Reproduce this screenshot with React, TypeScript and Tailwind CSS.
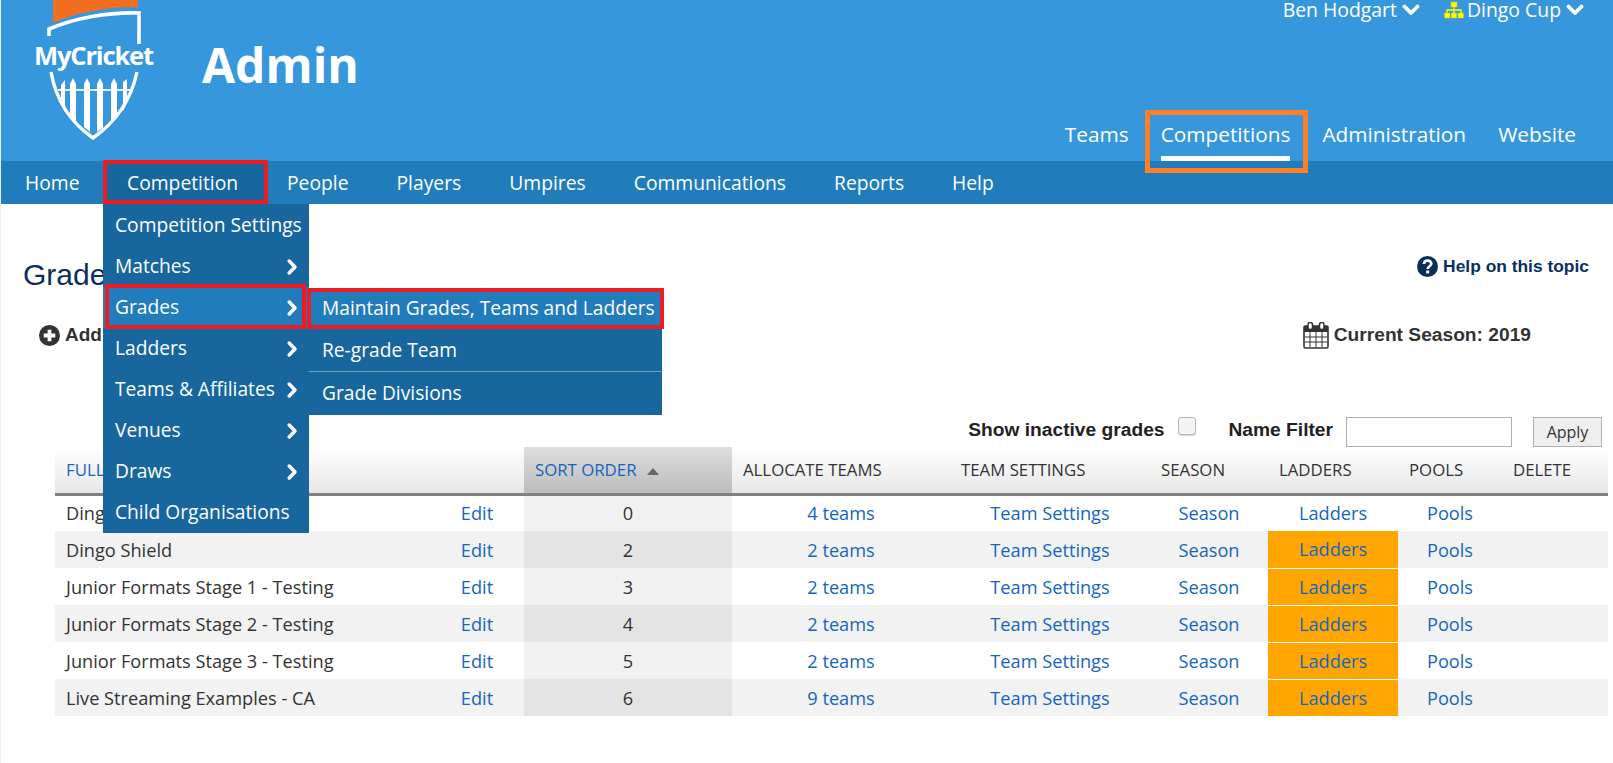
import React from "react";

const OS = "font-['Open_Sans',sans-serif]";

const Chevron = ({ className = "" }: { className?: string }) => (
  <svg viewBox="0 0 10 16" className={className} fill="none" stroke="currentColor" strokeWidth="3.4" strokeLinecap="round" strokeLinejoin="round">
    <path d="M2.2 2 L8 8 L2.2 14" />
  </svg>
);

const ChevronDown = () => (
  <svg viewBox="0 0 18 12" className="w-[18px] h-[12px] text-white" fill="none" stroke="currentColor" strokeWidth="3.8" strokeLinecap="round" strokeLinejoin="round">
    <path d="M2.5 2.5 L9 9 L15.5 2.5" />
  </svg>
);

const Logo = () => (
  <svg viewBox="0 0 135 145" className="w-[135px] h-[145px] shrink-0 block">
    <path d="M23 0 H108 V7.5 C85 6 50 11 23 23 Z" fill="#f26f21" />
    <path d="M19 36 V29 C45 18 78 12 109 13 V44" fill="none" stroke="#fff" strokeWidth="3.6" />
    <text x="4" y="65" fill="#fff" fontFamily="'Open Sans', sans-serif" fontWeight="700" fontSize="25.6" letterSpacing="-1.2">MyCricket</text>
    <path d="M21 72 C26 100 40 122 63 138 C86 122 101 100 107 72" fill="none" stroke="#fff" strokeWidth="3.4" />
    <g fill="#fff">
      <path d="M31 85 L35 80 V112 L31 104 Z" />
      <path d="M40 84 L43 78 L46 84 V122 L40 117 Z" />
      <path d="M54 84 L57 78 L60 84 V132 L54 127 Z" />
      <path d="M67 84 L70 78 L73 84 V128 L67 132 Z" />
      <path d="M81 84 L84 78 L87 84 V117 L81 122 Z" />
      <path d="M93 82 L97 79 V103 L93 111 Z" />
      <rect x="28" y="89" width="72" height="1.8" />
    </g>
  </svg>
);

const OrgIcon = () => (
  <svg viewBox="0 0 20 18" className="w-[20px] h-[18px]">
    <g fill="#ffff00" stroke="#c9c900" strokeWidth="0.5">
      <rect x="7" y="1" width="6" height="5" />
      <rect x="0.5" y="12" width="5.5" height="5" />
      <rect x="7.2" y="12" width="5.5" height="5" />
      <rect x="14" y="12" width="5.5" height="5" />
    </g>
    <path d="M10 6 V12 M3 12 V9 H17 V12" stroke="#ffff00" strokeWidth="1.3" fill="none" />
  </svg>
);

const CalendarIcon = () => (
  <svg viewBox="0 0 26 27" className="w-[26px] h-[27px] shrink-0">
    <rect x="1" y="4" width="24" height="22" rx="1.5" fill="#fff" stroke="#333" strokeWidth="1.6" />
    <rect x="1" y="4" width="24" height="6" fill="#333" />
    <rect x="5" y="0.5" width="4.5" height="7" rx="2" fill="#fff" stroke="#333" strokeWidth="1.5" />
    <rect x="16.5" y="0.5" width="4.5" height="7" rx="2" fill="#fff" stroke="#333" strokeWidth="1.5" />
    <path d="M7 10 V25 M13 10 V25 M19 10 V25 M2 15 H24 M2 20 H24" stroke="#333" strokeWidth="1" />
  </svg>
);

const CircleGlyph = ({ kind, color }: { kind: "plus" | "help"; color: string }) => (
  <svg viewBox="0 0 20 20" className="w-[21px] h-[21px] shrink-0">
    <circle cx="10" cy="10" r="10" fill={color} />
    {kind === "plus" ? (
      <path d="M10 4.5 V15.5 M4.5 10 H15.5" stroke="#fff" strokeWidth="3.6" />
    ) : (
      <>
        <path d="M6.6 7.6 C6.8 3.4 13.6 3.4 13.6 7.4 C13.6 9.8 10.2 9.8 10.2 12.4" fill="none" stroke="#fff" strokeWidth="2.5" />
        <rect x="8.8" y="13.8" width="2.8" height="2.8" fill="#fff" />
      </>
    )}
  </svg>
);

const menu: [string, boolean][] = [
  ["Competition Settings", false],
  ["Matches", true],
  ["Grades", true],
  ["Ladders", true],
  ["Teams & Affiliates", true],
  ["Venues", true],
  ["Draws", true],
  ["Child Organisations", false],
];

const rows: [string, string, string, boolean][] = [
  ["Dingo Cup", "0", "4 teams", false],
  ["Dingo Shield", "2", "2 teams", true],
  ["Junior Formats Stage 1 - Testing", "3", "2 teams", true],
  ["Junior Formats Stage 2 - Testing", "4", "2 teams", true],
  ["Junior Formats Stage 3 - Testing", "5", "2 teams", true],
  ["Live Streaming Examples - CA", "6", "9 teams", true],
];

const thCls = "text-left font-normal pl-[11px] text-[16.8px] text-[#333] border-b-[3px] border-[#808080]";
const link = "text-[#1565c0]";

export default function App() {
  return (
    <div className={`relative w-[1613px] h-[763px] overflow-hidden bg-white border-l border-[#eeeeee] ${OS} text-[18px] text-[#333]`}>
      {/* Header */}
      <header className="h-[161px] bg-[#3797dc] flex text-white">
        <div className="ml-[29px]"><Logo /></div>
        <div className="ml-[37px] mt-[30px] text-[48px] leading-[70px] font-bold">Admin</div>
        <div className="ml-auto flex flex-col items-end">
          <div className="h-[20px] flex items-center pr-[29px] text-[19.4px] leading-[20px]">
            <span>Ben Hodgart</span>
            <span className="ml-[5px]"><ChevronDown /></span>
            <span className="ml-[24px]"><OrgIcon /></span>
            <span className="ml-[3px]">Dingo Cup</span>
            <span className="ml-[5px]"><ChevronDown /></span>
          </div>
          <nav className="mt-auto flex pr-[37px] text-[20.8px] leading-[27px] gap-[32px]">
            <span className="h-[40px]">Teams</span>
            <span className="h-[40px] border-b-[5px] border-white">Competitions</span>
            <span className="h-[40px]">Administration</span>
            <span className="h-[40px]">Website</span>
          </nav>
        </div>
      </header>

      {/* Primary nav */}
      <nav className="h-[43px] bg-[#217cbb] flex text-white text-[19.3px] leading-[43px]">
        <span className="w-[102px] pl-[24px]">Home</span>
        <span className="w-[165px] pl-[24px] bg-[#17669e]">Competition</span>
        <div className="flex gap-[48px] ml-[19px]">
          <span>People</span>
          <span>Players</span>
          <span>Umpires</span>
          <span>Communications</span>
          <span>Reports</span>
          <span>Help</span>
        </div>
      </nav>

      {/* Page body */}
      <main className="relative">
        <div className="flex pl-[22px] pr-[24px] pt-[49px]">
          <h1 className="font-['Liberation_Sans',sans-serif] text-[30px] leading-[44px] text-[#0b2d5c]">Grades</h1>
          <div className="ml-auto flex items-center h-[26px] gap-[5px] font-['Liberation_Sans',sans-serif] font-bold text-[17.4px] text-[#0a2f5f]">
            <CircleGlyph kind="help" color="#0a2f5f" />
            <span>Help on this topic</span>
          </div>
        </div>
        <div className="flex items-center pl-[38px] pr-[82px] mt-[24px] h-[28px] font-['Liberation_Sans',sans-serif] font-bold text-[19px] text-[#333]">
          <CircleGlyph kind="plus" color="#333333" />
          <span className="ml-[5px]">Add Grade</span>
          <div className="ml-auto flex items-center gap-[5px] text-[19.2px]">
            <CalendarIcon />
            <span>Current Season: 2019</span>
          </div>
        </div>
        <div className="flex items-start justify-end pr-[11px] mt-[68px] h-[30px] font-['Liberation_Sans',sans-serif] font-bold text-[19.2px] text-[#222]">
          <span className="mt-[2px] leading-[22px]">Show inactive grades</span>
          <span className="ml-[14px] w-[18px] h-[18px] rounded-[3px] border border-[#b5b5b5] bg-[#f4f4f4] shadow-[0_1px_1px_rgba(0,0,0,0.15)]" />
          <span className="ml-[32px] mt-[2px] leading-[22px]">Name Filter</span>
          <span className="ml-[13px] w-[166px] h-[30px] border border-[#b0b0b0] bg-white" />
          <button className="ml-[21px] w-[69px] h-[30px] border border-[#b0b0b0] bg-[#eeeeee] font-['Open_Sans',sans-serif] font-normal text-[16px] text-[#333]">Apply</button>
        </div>

        <table className="table-fixed border-collapse ml-[54px] w-[1553px] text-[18.2px] leading-[24px]">
          <colgroup>
            <col className="w-[375px]" />
            <col className="w-[94px]" />
            <col className="w-[208px]" />
            <col className="w-[218px]" />
            <col className="w-[200px]" />
            <col className="w-[118px]" />
            <col className="w-[130px]" />
            <col className="w-[104px]" />
            <col className="w-[106px]" />
          </colgroup>
          <thead>
            <tr className="h-[47px] bg-gradient-to-b from-white to-[#e6e6e6]">
              <th className={`${thCls} text-[#1565c0]`} colSpan={2}>FULL NAME</th>
              <th className={`${thCls} bg-gradient-to-b from-[#dedede] to-[#bcbcbc]`}>
                <span className="text-[#1565c0]">SORT ORDER</span>
                <span className="inline-block ml-[11px] align-middle w-0 h-0 border-x-[6px] border-x-transparent border-b-[7px] border-b-[#666]" />
              </th>
              <th className={thCls}>ALLOCATE TEAMS</th>
              <th className={thCls}>TEAM SETTINGS</th>
              <th className={thCls}>SEASON</th>
              <th className={thCls}>LADDERS</th>
              <th className={thCls}>POOLS</th>
              <th className={thCls}>DELETE</th>
            </tr>
          </thead>
          <tbody>
            {rows.map(([name, order, teams, warn], i) => {
              const striped = i % 2 === 1;
              return (
                <tr key={name} className={`h-[37px] ${striped ? "bg-[#f2f2f2]" : "bg-white"}`}>
                  <td className="pl-[11px] text-[#333]">{name}</td>
                  <td className={`text-center ${link}`}>Edit</td>
                  <td className={`text-center ${striped ? "bg-[#e4e4e4]" : "bg-[#f1f1f1]"}`}>{order}</td>
                  <td className={`text-center ${link}`}>{teams}</td>
                  <td className={`text-center ${link}`}>Team Settings</td>
                  <td className={`text-center ${link}`}>Season</td>
                  <td className={`text-center ${link} ${warn ? "bg-[#ffa500] border-b border-white" : ""}`}>Ladders</td>
                  <td className={`text-center ${link}`}>Pools</td>
                  <td />
                </tr>
              );
            })}
          </tbody>
        </table>
      </main>

      {/* Dropdown */}
      <div className="absolute left-[102px] top-[204px] w-[206px] bg-[#17669e] text-white text-[19.2px] pt-[1px] z-10">
        {menu.map(([label, sub]) => (
          <div key={label} className={`h-[41px] flex items-center pl-[12px] pr-[12px] whitespace-nowrap ${label === "Grades" ? "bg-[#217cbb]" : ""}`}>
            <span>{label}</span>
            {sub && <Chevron className="ml-auto w-[10px] h-[16px] shrink-0" />}
          </div>
        ))}
      </div>
      <div className="absolute left-[308px] top-[288px] w-[353px] bg-[#17669e] text-white text-[19.2px] z-10">
        <div className="h-[41px] flex items-center pl-[13px] bg-[#217cbb] whitespace-nowrap">Maintain Grades, Teams and Ladders</div>
        <div className="h-[43px] flex items-center pl-[13px] border-b border-[#6f9fc2]">Re-grade Team</div>
        <div className="h-[43px] flex items-center pl-[13px]">Grade Divisions</div>
      </div>

      {/* Annotation boxes */}
      <div className="absolute left-[102px] top-[160px] w-[165px] h-[44px] border-[4px] border-[#ed1c24] z-20" />
      <div className="absolute left-[104px] top-[284px] w-[201px] h-[45px] border-[4px] border-[#ed1c24] z-20" />
      <div className="absolute left-[306px] top-[288px] w-[357px] h-[41px] border-[4px] border-[#ed1c24] z-20" />
      <div className="absolute left-[1144px] top-[110px] w-[163px] h-[63px] border-[5px] border-[#ff7f27] z-20" />
    </div>
  );
}
